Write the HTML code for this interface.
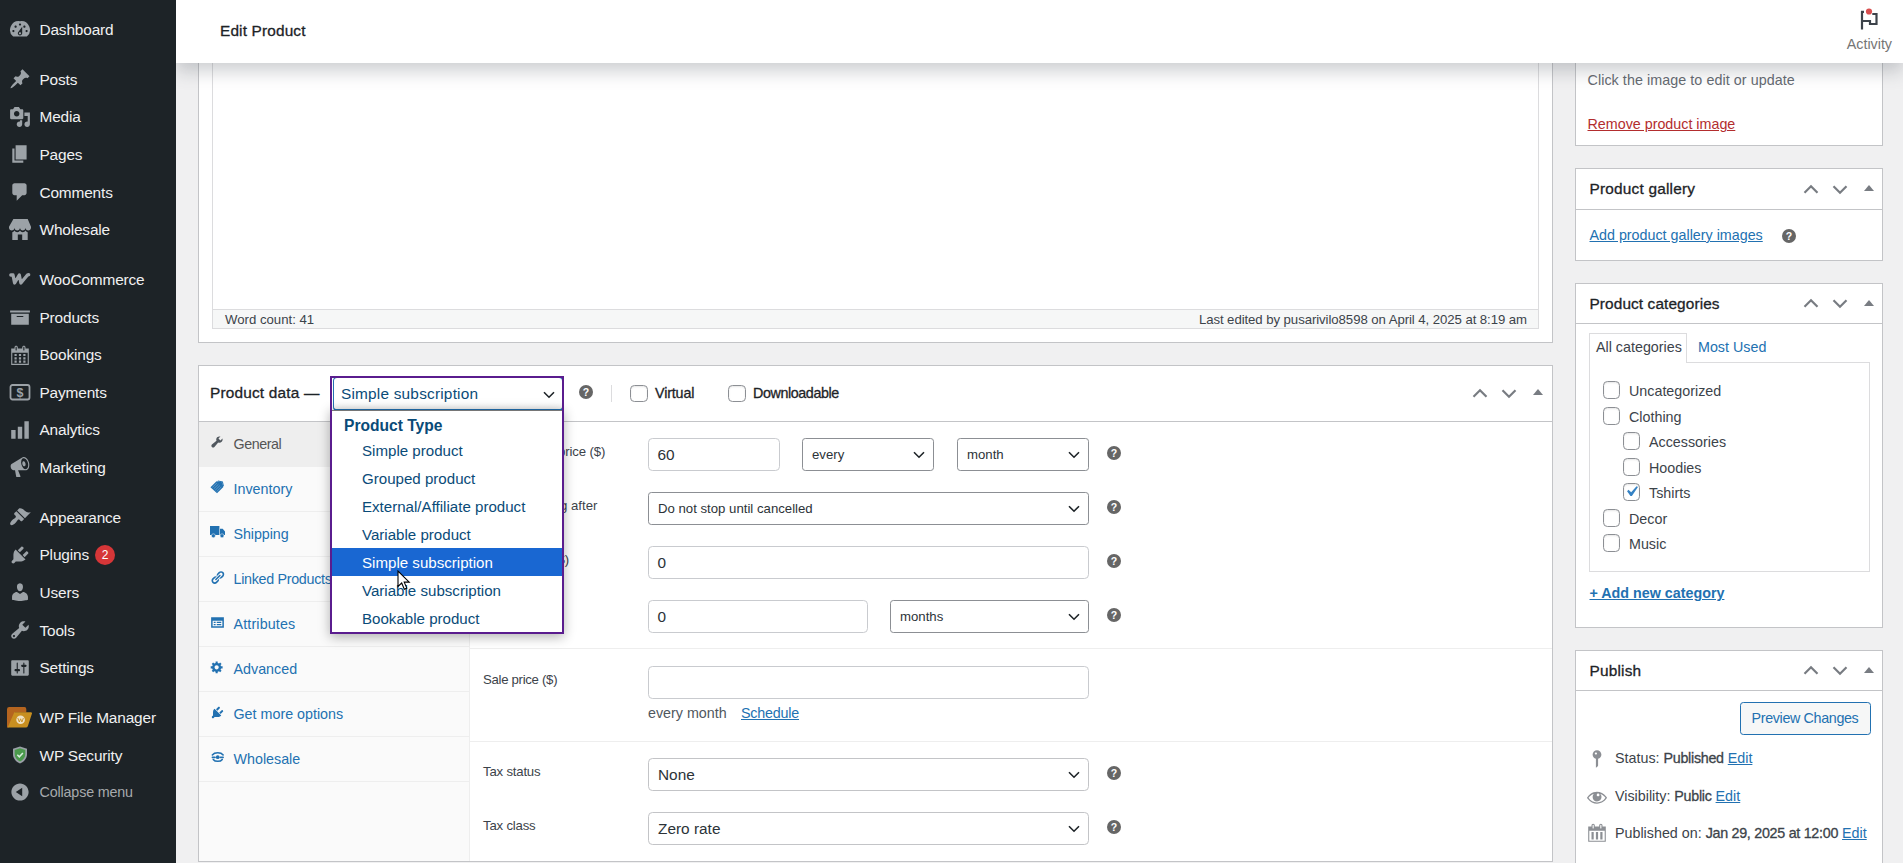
<!DOCTYPE html>
<html lang="en">
<head>
<meta charset="utf-8">
<title>Edit Product</title>
<style>
*{box-sizing:border-box;margin:0;padding:0}
html,body{width:1903px;height:863px;overflow:hidden}
body{background:#f0f0f1;font-family:"Liberation Sans",sans-serif;font-size:14.3px;color:#3c434a;position:relative}
a{color:#2271b1}
.abs{position:absolute}
svg{display:block}
/* sidebar */
#side{position:absolute;left:0;top:0;width:176px;height:863px;background:#1d2327;z-index:30}
.mi{position:absolute;left:0;width:176px;height:37px;color:#f0f0f1;font-size:15.4px;line-height:37px;white-space:nowrap}
.mi svg{position:absolute;left:9px;top:7.5px;width:22px;height:22px;fill:#9ca2a7}
.mi span.t{position:absolute;left:39.5px;top:0;letter-spacing:-.15px}
.badge{position:absolute;background:#d63638;color:#fff;border-radius:10px;width:20px;height:20px;font-size:12px;line-height:20px;text-align:center;top:8.5px}
/* header */
#hdr{position:absolute;left:176px;top:0;width:1727px;height:63px;background:#fff;box-shadow:0 8px 17px 0 rgba(85,93,102,.3);z-index:20}
#hdr .ttl{position:absolute;left:44px;top:21px;letter-spacing:.15px;font-size:15.4px;line-height:20px;font-weight:bold;color:#1d2327}
#hdr .act{position:absolute;right:11px;top:36px;font-size:14.3px;line-height:16px;color:#757575}
/* postboxes */
.pb{position:absolute;background:#fff;border:1px solid #c3c4c7}
.pbh{position:absolute;left:0;right:0;top:0;border-bottom:1px solid #c3c4c7}
.pbh h2{position:absolute;left:13px;font-size:15.4px;font-weight:bold;color:#1d2327;white-space:nowrap}
.hact{position:absolute;right:0;top:0}
.help{position:absolute;width:16px;height:16px}

.cb{width:17.600px;height:17.600px;border:1px solid #8c8f94;border-radius:4.400px;background:#fff;box-shadow:inset 0 1px 2px rgba(0,0,0,.1)}
.tab .ti{position:absolute;left:11px;top:13px;width:15px;height:15px}
.tab .ti svg{width:15px;height:15px}
.inp{border:1px solid #c9cbcf;border-radius:4.400px;background:#fff;padding-left:8.400px;color:#2c3338;white-space:nowrap}
.sel{border:1px solid #8c8f94;border-radius:3.300px;background:#fff;padding-left:9px;color:#2c3338;white-space:nowrap}
.lab{font-size:13.200px;line-height:20px;color:#3c434a;white-space:nowrap}

a{text-decoration:underline}

.sb{font-weight:normal !important;-webkit-text-stroke:.3px currentColor}
b{font-weight:normal;-webkit-text-stroke:.3px currentColor;letter-spacing:-.28px}
</style>
</head>
<body>

<!-- ============ SIDEBAR ============ -->
<div id="side">
<div class="mi" style="top:11.0px"><svg viewBox="0 0 20 20"><path d="M3.76 16h12.48A7.998 7.998 0 0010 2a7.998 7.998 0 00-6.24 14zM10 4c.55 0 1 .45 1 1s-.45 1-1 1-1-.45-1-1 .45-1 1-1zM6 6c.55 0 1 .45 1 1s-.45 1-1 1-1-.45-1-1 .45-1 1-1zm8 0c.55 0 1 .45 1 1s-.45 1-1 1-1-.45-1-1 .45-1 1-1zm-5.37 5.55L12 7v6c0 1.1-.9 2-2 2s-2-.9-2-2c0-.57.24-1.08.63-1.45zM4 10c.55 0 1 .45 1 1s-.45 1-1 1-1-.45-1-1 .45-1 1-1zm12 0c.55 0 1 .45 1 1s-.45 1-1 1-1-.45-1-1 .45-1 1-1zm-5 3c0-.55-.45-1-1-1s-1 .45-1 1 .45 1 1 1 1-.45 1-1z"/></svg><span class="t">Dashboard</span></div>
<div class="mi" style="top:60.5px"><svg viewBox="0 0 20 20"><path d="M10.44 3.02l1.82-1.82 6.36 6.35-1.83 1.82c-1.05-.68-2.48-.57-3.41.36l-.75.75c-.92.93-1.04 2.35-.35 3.41l-1.83 1.82-2.41-2.41-2.8 2.79c-.42.42-3.38 2.71-3.8 2.29s1.86-3.39 2.28-3.81l2.79-2.79L4.1 9.36l1.83-1.82c1.05.69 2.48.57 3.4-.36l.75-.75c.93-.92 1.05-2.35.36-3.41z"/></svg><span class="t">Posts</span></div>
<div class="mi" style="top:98.0px"><svg viewBox="0 0 20 20"><path d="M13 11V4c0-.55-.45-1-1-1h-1.67L9 1H5L3.67 3H2c-.55 0-1 .45-1 1v7c0 .55.45 1 1 1h10c.55 0 1-.45 1-1zM7 4.5c1.38 0 2.5 1.12 2.5 2.5S8.38 9.5 7 9.5 4.5 8.38 4.5 7 5.62 4.5 7 4.5zM14 6h5v10.5c0 1.38-1.12 2.5-2.5 2.5S14 17.88 14 16.5s1.12-2.5 2.5-2.5c.17 0 .34.02.5.05V9h-3V6zm-4 8.05V13h2v3.5c0 1.38-1.12 2.5-2.5 2.5S7 17.88 7 16.5 8.12 14 9.5 14c.17 0 .34.02.5.05z"/></svg><span class="t">Media</span></div>
<div class="mi" style="top:135.5px"><svg viewBox="0 0 20 20"><path d="M6 15V2h10v13H6zm-1 1h8v2H3V5h2v11z"/></svg><span class="t">Pages</span></div>
<div class="mi" style="top:173.5px"><svg viewBox="0 0 20 20"><path d="M5 2h9c1.1 0 2 .9 2 2v7c0 1.1-.9 2-2 2h-2l-5 5v-5H5c-1.1 0-2-.9-2-2V4c0-1.1.9-2 2-2z"/></svg><span class="t">Comments</span></div>
<div class="mi" style="top:211.0px"><svg viewBox="0 0 20 20"><path d="M1 10c.41.29.96.43 1.5.43.55 0 1.09-.14 1.5-.43.62-.46 1-1.17 1-2 0 .83.37 1.54 1 2 .41.29.96.43 1.5.43.55 0 1.09-.14 1.5-.43.62-.46 1-1.17 1-2 0 .83.37 1.54 1 2 .41.29.96.43 1.51.43.54 0 1.08-.14 1.49-.43.62-.46 1-1.17 1-2 0 .83.37 1.54 1 2 .41.29.96.43 1.5.43.55 0 1.09-.14 1.5-.43.63-.46 1-1.17 1-2V7l-3-7H4L0 7v1c0 .83.37 1.54 1 2zm2 8.99h5v-5h4v5h5v-7c-.37-.05-.72-.22-1-.43-.63-.45-1-.73-1-1.56 0 .83-.38 1.11-1 1.56-.41.3-.95.43-1.49.44-.55 0-1.1-.14-1.51-.44-.63-.45-1-.73-1-1.56 0 .83-.38 1.11-1 1.56-.41.3-.95.43-1.5.44-.54 0-1.09-.14-1.5-.44-.63-.45-1-.73-1-1.56 0 .83-.38 1.11-1 1.56-.29.21-.63.38-1 .44v6.99z"/></svg><span class="t">Wholesale</span></div>
<div class="mi" style="top:260.5px"><svg viewBox="0 0 22 22" style="fill:none;stroke:#9ca2a7;stroke-width:3.300;stroke-linejoin:round;stroke-linecap:round"><path d="M1.800 7 h2.200 l1.600 8 l4.700 -8 l1.600 8 l5.300 -6.500 q1.500 -2 2.500 -1.800"/></svg><span class="t">WooCommerce</span></div>
<div class="mi" style="top:298.5px"><svg viewBox="0 0 20 20"><path d="M19 4v2H1V4h18zM2 7h16v10H2V7zm11 3V9H7v1h6z"/></svg><span class="t">Products</span></div>
<div class="mi" style="top:336.0px"><svg viewBox="0 0 20 20"><path d="M15 4h3v15H2V4h3V3c0-.41.15-.76.44-1.06.29-.29.65-.44 1.06-.44s.77.15 1.06.44c.29.3.44.65.44 1.06v1h4V3c0-.41.15-.76.44-1.06.29-.29.65-.44 1.06-.44s.77.15 1.06.44c.29.3.44.65.44 1.06v1zM6 3v2.500c0 .14.05.26.15.36.09.09.21.14.35.14s.26-.05.35-.14c.1-.1.15-.22.15-.36V3c0-.14-.05-.26-.15-.35-.09-.1-.21-.15-.35-.15s-.26.05-.35.15c-.1.09-.15.21-.15.35zm7 0v2.500c0 .14.05.26.14.36.1.09.22.14.36.14s.26-.05.36-.14c.09-.1.14-.22.14-.36V3c0-.14-.05-.26-.14-.35-.1-.1-.22-.15-.36-.15s-.26.05-.36.15c-.09.09-.14.21-.14.35zm4 15V8H3v10h14zM7 9v2H5V9h2zm2 0h2v2H9V9zm4 2V9h2v2h-2zm-6 1v2H5v-2h2zm2 0h2v2H9v-2zm4 2v-2h2v2h-2zm-6 1v2H5v-2h2zm4 2H9v-2h2v2zm4 0h-2v-2h2v2z"/></svg><span class="t">Bookings</span></div>
<div class="mi" style="top:373.5px"><svg viewBox="0 0 22 22"><rect x="1.500" y="4" width="19" height="14.500" rx="2" style="fill:none;stroke:#9ca2a7;stroke-width:1.800"/><text x="11" y="15.800" text-anchor="middle" style="font:bold 12.500px 'Liberation Sans',sans-serif;fill:#9ca2a7">$</text></svg><span class="t">Payments</span></div>
<div class="mi" style="top:411.0px"><svg viewBox="0 0 20 20"><path d="M18 18V2h-4v16h4zm-6 0V7H8v11h4zm-6 0v-8H2v8h4z"/></svg><span class="t">Analytics</span></div>
<div class="mi" style="top:448.5px"><svg viewBox="0 0 20 20"><path d="M18.15 5.94c.46 1.62.38 3.22-.02 4.48-.42 1.28-1.26 2.18-2.3 2.48-.16.06-.26.06-.4.06-.06.02-.12.02-.18.02-.06.02-.14.02-.22.02h-6.8l2.22 5.5c.02.14-.06.26-.14.34-.08.1-.24.16-.34.16H6.95c-.1 0-.26-.06-.34-.16-.08-.08-.16-.2-.14-.34l-1-5.5H4.25l-.02-.02c-.5.06-1.08-.18-1.54-.62s-.88-1.08-1.06-1.88c-.24-.8-.2-1.56-.02-2.2.18-.62.58-1.08 1.06-1.3l.02-.02 9-5.4c.1-.06.18-.1.24-.16.06-.04.14-.08.24-.12.16-.08.28-.12.5-.18 1.04-.3 2.24.1 3.22.98s1.84 2.24 2.26 3.86zm-2.58 5.98h-.02c.4-.1.74-.34 1.04-.7.58-.7.86-1.76.86-3.04 0-.64-.1-1.3-.28-1.98-.34-1.36-1.02-2.5-1.78-3.24s-1.68-1.1-2.46-.88c-.82.22-1.4.96-1.7 2-.32 1.04-.28 2.36.06 3.72.38 1.36 1 2.5 1.8 3.24.78.74 1.62 1.1 2.48.88zm-2.54-7.08c.22-.04.42-.02.62.04.38.16.76.48 1.02 1s.42 1.2.42 1.78c0 .3-.04.56-.12.8-.18.48-.44.84-.86.94-.34.1-.8-.06-1.14-.4s-.64-.86-.78-1.5c-.18-.62-.12-1.24.02-1.72s.48-.84.82-.94z"/></svg><span class="t">Marketing</span></div>
<div class="mi" style="top:498.5px"><svg viewBox="0 0 20 20"><path d="M14.48 11.06L7.41 3.99l1.5-1.5c.5-.56 2.3-.47 3.51.32 1.21.8 1.43 1.28 2.91 2.1 1.18.64 2.45 1.26 4.45.85zm-.71.71L6.7 4.7 4.93 6.47c-.39.39-.39 1.02 0 1.41l1.06 1.06c.39.39.39 1.03 0 1.42-.6.6-1.43 1.11-2.21 1.69-.35.26-.7.53-1.01.84C1.43 14.23.4 16.08 1.4 17.07c.99 1 2.84-.03 4.18-1.36.31-.31.58-.66.85-1.02.57-.78 1.08-1.61 1.69-2.21.39-.39 1.02-.39 1.41 0l1.06 1.06c.39.39 1.02.39 1.41 0z"/></svg><span class="t">Appearance</span></div>
<div class="mi" style="top:536.0px"><svg viewBox="0 0 20 20"><path d="M13.11 4.36L9.87 7.6 8 5.73l3.24-3.24c.35-.34 1.05-.2 1.56.32.52.51.66 1.21.31 1.55zm-8 1.77l.91-1.12 9.01 9.01-1.19.84c-.71.71-2.63 1.16-3.82 1.16H6.14L4.9 17.26c-.59.59-1.54.59-2.12 0-.59-.58-.59-1.53 0-2.12l1.24-1.24v-3.88c0-1.13.4-3.19 1.09-3.89zm7.26 3.97l3.24-3.24c.34-.35 1.04-.21 1.55.31.52.51.66 1.21.31 1.55l-3.24 3.25z"/></svg><span class="t">Plugins</span><span class="badge" style="left:95px">2</span></div>
<div class="mi" style="top:573.5px"><svg viewBox="0 0 20 20"><path d="M10 9.25c-2.27 0-2.73-3.44-2.73-3.44C7 4.02 7.82 2 9.97 2c2.16 0 2.98 2.02 2.71 3.81 0 0-.41 3.44-2.68 3.44zm0 2.57L12.72 10c2.39 0 4.52 2.33 4.52 4.53v2.49s-3.65 1.13-7.24 1.13c-3.65 0-7.24-1.13-7.24-1.13v-2.49c0-2.25 1.94-4.48 4.47-4.48z"/></svg><span class="t">Users</span></div>
<div class="mi" style="top:611.5px"><svg viewBox="0 0 20 20"><path d="M16.68 9.77c-1.34 1.34-3.3 1.67-4.95.99l-5.41 6.52c-.99.99-2.59.99-3.58 0s-.99-2.59 0-3.57l6.52-5.42c-.68-1.65-.35-3.61.99-4.95 1.28-1.28 3.12-1.62 4.72-1.06l-2.89 2.89 2.82 2.82 2.86-2.87c.53 1.58.18 3.39-1.08 4.65zM3.81 16.21c.4.39 1.04.39 1.43 0 .4-.4.4-1.04 0-1.43-.39-.4-1.03-.4-1.43 0-.39.39-.39 1.03 0 1.43z"/></svg><span class="t">Tools</span></div>
<div class="mi" style="top:649.0px"><svg viewBox="0 0 20 20"><path d="M18 16V4c0-.55-.45-1-1-1H3c-.55 0-1 .45-1 1v12c0 .55.45 1 1 1h14c.55 0 1-.45 1-1zM8 11h1c.55 0 1 .45 1 1s-.45 1-1 1H8v1.5c0 .28-.22.5-.5.5s-.5-.22-.5-.5V13H6c-.55 0-1-.45-1-1s.45-1 1-1h1V5.500c0-.28.22-.5.5-.5s.5.22.5.5V11zm5-2h-1c-.55 0-1-.45-1-1s.45-1 1-1h1V5.500c0-.28.22-.5.5-.5s.5.22.5.5V7h1c.55 0 1 .45 1 1s-.45 1-1 1h-1v5.500c0 .28-.22.5-.5.5s-.5-.22-.5-.5V9z"/></svg><span class="t">Settings</span></div>
<div class="mi" style="top:699.0px"><svg viewBox="0 0 25 21" style="left:7px;top:7.500px;width:25px;height:21px"><path d="M0 2.200q0-2.200 2.200-2.200h15.300q1.800 0 1.800 2v3.500H8L1.500 20.500H0z" fill="#b4641f"/><path d="M7.300 5.300h16.500q1.600 0 1.100 1.500l-4 12.200q-.5 1.500-2.100 1.500H.6z" fill="#c88f20"/><circle cx="13.600" cy="12.800" r="4.300" fill="#efe2c6"/><path d="M10.800 11l1.500 4 1.300-3.200 1.300 3.200 1.500-4" fill="none" stroke="#c88f20" stroke-width=".9"/></svg><span class="t">WP File Manager</span></div>
<div class="mi" style="top:736.5px"><svg viewBox="0 0 22 22"><path d="M11 2.500l7 2.300v5.200c0 4.500-3 7.800-7 9.500-4-1.700-7-5-7-9.500V4.800z" fill="#9aa0a7"/><path d="M11 4.300l5.300 1.800v4c0 3.500-2.300 6.100-5.300 7.500-3-1.400-5.300-4-5.300-7.500v-4z" fill="#4a9a4c"/><path d="M8.300 10.800l2 2 3.600-3.800" fill="none" stroke="#d8f0de" stroke-width="1.500"/></svg><span class="t">WP Security</span></div>
<div class="mi" style="top:773.5px"><svg viewBox="0 0 20 20"><path d="M10 2.16c4.33 0 7.84 3.51 7.84 7.84s-3.51 7.84-7.84 7.84S2.16 14.330 2.16 10 5.670 2.16 10 2.16zm2 11.72V6.120L6.180 9.970z"/></svg><span class="t" style="color:#a7aaad;font-size:14.3px">Collapse menu</span></div>
</div>

<!-- ============ HEADER ============ -->
<div id="hdr">
  <div class="ttl sb">Edit Product</div>
  <svg class="abs" style="left:1683px;top:6px;width:22px;height:26px" viewBox="0 0 22 26"><path d="M2 5.800h3 M3 5v18.500 M3 15h8v3h6.500V8h-4.200" fill="none" stroke="#3c434a" stroke-width="2.200"/><circle cx="10" cy="5.500" r="3.100" fill="#d94f4f"/></svg>
  <div class="act">Activity</div>
</div>

<!-- ============ MAIN COLUMN ============ -->
<div class="pb" style="left:198px;top:-40px;width:1355px;height:383px"></div>
<div class="abs" style="left:212px;top:-20px;width:1327px;height:349px;border:1px solid #dcdcde;background:#fff"></div>
<div class="abs" style="left:212px;top:309px;width:1327px;height:20px;border:1px solid #dcdcde;background:#f6f7f7;font-size:13.200px;line-height:19px;color:#3c434a">
  <span class="abs" style="left:12px;top:0">Word count: 41</span>
  <span class="abs" style="right:11px;top:0;white-space:nowrap;letter-spacing:-.07px">Last edited by pusarivilo8598 on April 4, 2025 at 8:19 am</span>
</div>
<div class="pb" id="pd" style="left:198px;top:365px;width:1355px;height:497px">
<div class="pbh" style="height:56px"></div>
<h2 class="abs sb" style="left:11px;top:17px;font-size:15.400px;line-height:20px;font-weight:bold;color:#1d2327;white-space:nowrap;letter-spacing:.18px">Product data —</h2>
<div class="abs" style="left:134px;top:11px;width:230px;height:34px;border:1px solid #2271b1;border-bottom-width:2px;border-radius:4px;background:linear-gradient(#fff 80%,#f3f3f3);color:#0a4b78;font-size:15.400px;line-height:31px;padding-left:7px;letter-spacing:.2px;white-space:nowrap">Simple subscription<svg class="abs" style="right:7px;top:12.500px;width:12px;height:8px" viewBox="0 0 12 8"><path d="M1 1.200 L6 6.200 L11 1.200" fill="none" stroke="#1d2327" stroke-width="1.600"/></svg></div>
<svg class="abs" style="left:379.5px;top:18.800px;width:14px;height:14px" viewBox="0 0 14 14"><circle cx="7" cy="7" r="7" fill="#666"/><text x="7" y="10.800" text-anchor="middle" style="font:bold 10.500px 'Liberation Sans',sans-serif;fill:#fff">?</text></svg>
<div class="abs" style="left:412px;top:19px;width:1px;height:17px;background:#dcdcde"></div>
<div class="cb abs" style="left:431px;top:18.500px"></div><span class="abs sb" style="left:456px;top:17px;line-height:20px;letter-spacing:-.15px;color:#1d2327">Virtual</span>
<div class="cb abs" style="left:529px;top:18.500px"></div><span class="abs sb" style="left:554px;top:17px;line-height:20px;letter-spacing:-.4px;color:#1d2327">Downloadable</span>
<svg class="abs" style="left:1273px;top:21.5px;width:16px;height:11px" viewBox="0 0 16 10.500"><path d="M1.500 8.500 L8 2 L14.500 8.500" fill="none" stroke="#787c82" stroke-width="2.200"/></svg><svg class="abs" style="left:1302px;top:21.5px;width:16px;height:11px" viewBox="0 0 16 10.500"><path d="M1.500 2 L8 8.500 L14.500 2" fill="none" stroke="#787c82" stroke-width="2.200"/></svg><svg class="abs" style="left:1334px;top:23px;width:10px;height:6px" viewBox="0 0 10 6"><path d="M0 6 L5 0 L10 6z" fill="#787c82"/></svg>
<div class="abs" style="left:0;top:56px;width:271px;height:439px;background:#fafafa;border-right:1px solid #eee"></div>
<div class="tab abs" style="left:0;top:56px;width:270px;height:45px;border-bottom:1px solid #eee;background:#eee;color:#555"><span class="ti" style="fill:#50575e"><svg viewBox="0 0 20 20" style="width:14px;height:14px;margin:-.5px 0 0 -.3px"><path d="M16.680 9.770c-1.340 1.340-3.300 1.670-4.950.99l-5.410 6.520c-.99.99-2.590.99-3.580 0s-.99-2.590 0-3.570l6.520-5.420c-.68-1.650-.35-3.610.99-4.950 1.280-1.280 3.120-1.620 4.720-1.060l-2.890 2.890 2.820 2.820 2.860-2.870c.53 1.580.18 3.390-1.080 4.650z"/></svg></span><span class="abs" style="left:34.500px;top:12px;line-height:20px;white-space:nowrap;letter-spacing:-.45px">General</span></div>
<div class="tab abs" style="left:0;top:101px;width:270px;height:45px;border-bottom:1px solid #eee;background:transparent;color:#2271b1"><span class="ti" style="fill:#2271b1"><svg viewBox="0 0 15 15" style="width:14px;height:14px;margin:0 0 0 0"><path d="M.5 7.800 L7 1.300 L13 2.300 L14.300 7.500 L7.500 14.200z"/><path d="M2.500 8 L7.600 3 M4 9.500 L9.100 4.500 M5.500 11 L10.600 6 M7 12.500 L12.100 7.500" stroke="#fafafa" stroke-width=".55" opacity=".55"/><path d="M8.500 .6 L13.800 1.500 L14.900 6.300 L13.900 6.600 L12.900 2.400 L8.300 1.600z"/></svg></span><span class="abs" style="left:34.500px;top:12px;line-height:20px;white-space:nowrap">Inventory</span></div>
<div class="tab abs" style="left:0;top:146px;width:270px;height:45px;border-bottom:1px solid #eee;background:transparent;color:#2271b1"><span class="ti" style="fill:#2271b1"><svg viewBox="0 0 16 13" style="width:16px;height:13px;margin:1.300px 0 0 -.2px"><path d="M0 0h9.400v9H0z M10 2.700h2.700l2.300 2.900v3.400H10z"/><circle cx="3.400" cy="9.800" r="2" stroke="#fafafa" stroke-width=".5"/><circle cx="12" cy="9.800" r="2" stroke="#fafafa" stroke-width=".5"/></svg></span><span class="abs" style="left:34.500px;top:12px;line-height:20px;white-space:nowrap;letter-spacing:-.08px">Shipping</span></div>
<div class="tab abs" style="left:0;top:191px;width:270px;height:45px;border-bottom:1px solid #eee;background:transparent;color:#2271b1"><span class="ti" style="fill:#2271b1"><svg viewBox="0 0 20 20"><path d="M17.740 2.760c1.680 1.690 1.680 4.410 0 6.100l-1.530 1.520c-1.120 1.120-2.700 1.470-4.140 1.090l2.620-2.610.76-.77.76-.76c.84-.84.84-2.200 0-3.040-.84-.85-2.200-.85-3.040 0l-.77.76-3.380 3.380c-.37-1.440-.02-3.020 1.100-4.140l1.520-1.530c1.690-1.680 4.420-1.680 6.100 0zM8.590 13.430l5.340-5.340c.42-.42.42-1.100 0-1.520-.44-.43-1.130-.39-1.530 0l-5.330 5.340c-.42.42-.42 1.100 0 1.520.44.43 1.130.39 1.520 0zm-.76 2.290l4.140-4.150c.38 1.440.03 3.020-1.090 4.140l-1.520 1.530c-1.690 1.680-4.410 1.680-6.100 0-1.680-1.680-1.680-4.420 0-6.100l1.530-1.520c1.120-1.120 2.700-1.470 4.140-1.100l-4.140 4.150c-.85.84-.85 2.200 0 3.050.84.840 2.200.840 3.040 0z"/></svg></span><span class="abs" style="left:34.500px;top:12px;line-height:20px;white-space:nowrap;letter-spacing:-.3px">Linked Products</span></div>
<div class="tab abs" style="left:0;top:236px;width:270px;height:45px;border-bottom:1px solid #eee;background:transparent;color:#2271b1"><span class="ti" style="fill:#2271b1"><svg viewBox="0 0 20 20"><path d="M1.500 3h17v14h-17z M3.500 7.500v7.500h13V7.500z M5 9h2.500v1.500H5z M9 9h6v1.500H9z M5 12h2.500v1.500H5z M9 12h6v1.500H9z" fill-rule="evenodd"/></svg></span><span class="abs" style="left:34.500px;top:12px;line-height:20px;white-space:nowrap;letter-spacing:.15px">Attributes</span></div>
<div class="tab abs" style="left:0;top:281px;width:270px;height:45px;border-bottom:1px solid #eee;background:transparent;color:#2271b1"><span class="ti" style="fill:#2271b1"><svg viewBox="0 0 20 20" style="width:14px;height:14px;margin:.3px 0 0 .3px"><path d="M18 12h-2.180c-.17.7-.44 1.350-.81 1.930l1.540 1.540-2.100 2.100-1.540-1.540c-.58.36-1.230.63-1.910.79V19H8v-2.180c-.68-.16-1.330-.43-1.910-.79l-1.540 1.540-2.120-2.120 1.540-1.540c-.36-.58-.63-1.230-.79-1.910H1V9.030h2.170c.16-.7.44-1.350.8-1.940L2.430 5.550l2.100-2.100 1.540 1.540c.58-.37 1.240-.64 1.930-.81V2h3v2.180c.68.16 1.330.43 1.910.79l1.540-1.540 2.120 2.120-1.540 1.540c.36.59.64 1.240.8 1.940H18V12zm-8.500 1.500c1.660 0 3-1.340 3-3s-1.340-3-3-3-3 1.340-3 3 1.340 3 3 3z"/></svg></span><span class="abs" style="left:34.500px;top:12px;line-height:20px;white-space:nowrap">Advanced</span></div>
<div class="tab abs" style="left:0;top:326px;width:270px;height:45px;border-bottom:1px solid #eee;background:transparent;color:#2271b1"><span class="ti" style="fill:#2271b1"><svg viewBox="0 0 20 20"><path d="M13.110 4.360L9.870 7.600 8 5.730l3.240-3.240c.35-.34 1.050-.2 1.560.32.52.51.66 1.210.31 1.550zm-8 1.770l.91-1.120 9.010 9.010-1.190.84c-.71.71-2.630 1.160-3.820 1.160H6.140L4.900 17.260c-.59.59-1.540.59-2.120 0-.59-.58-.59-1.530 0-2.120l1.240-1.240v-3.880c0-1.130.4-3.190 1.090-3.890zm7.260 3.970l3.240-3.240c.34-.35 1.040-.21 1.550.31.52.51.66 1.210.31 1.550l-3.240 3.250z"/></svg></span><span class="abs" style="left:34.500px;top:12px;line-height:20px;white-space:nowrap">Get more options</span></div>
<div class="tab abs" style="left:0;top:371px;width:270px;height:45px;border-bottom:1px solid #eee;background:transparent;color:#2271b1"><span class="ti" style="fill:#2271b1"><svg viewBox="0 0 15 15" style="width:13.500px;height:13.500px;margin:.2px 0 0 .5px"><path d="M1.500 5.500 C4 2.300 11 2.300 13.500 5.500" fill="none" stroke="#2271b1" stroke-width="1.700" stroke-linecap="round"/><path d="M1.500 8.200 h3 M10.500 8.200 h3" fill="none" stroke="#2271b1" stroke-width="1.700" stroke-linecap="round"/><path d="M2.500 10.500 C4.500 13.300 10.500 13.300 12.500 10.500" fill="none" stroke="#2271b1" stroke-width="1.700" stroke-linecap="round"/><circle cx="7.500" cy="8" r="2.100"/></svg></span><span class="abs" style="left:34.500px;top:12px;line-height:20px;white-space:nowrap">Wholesale</span></div>
<span class="abs lab" style="left:284px;top:76.0px;letter-spacing:-.1px">Subscription price ($)</span>
<div class="abs inp" style="left:449px;top:72px;width:132px;height:33px;font-size:15.4px;line-height:31px">60</div>
<div class="abs sel" style="left:603px;top:72px;width:132px;height:33px;font-size:13.2px;line-height:31px">every<svg class="abs" style="right:8.500px;top:12.0px;width:12px;height:8px" viewBox="0 0 12 8"><path d="M1 1.200 L6 6.200 L11 1.200" fill="none" stroke="#1d2327" stroke-width="1.600"/></svg></div>
<div class="abs sel" style="left:758px;top:72px;width:132px;height:33px;font-size:13.2px;line-height:31px">month<svg class="abs" style="right:8.500px;top:12.0px;width:12px;height:8px" viewBox="0 0 12 8"><path d="M1 1.200 L6 6.200 L11 1.200" fill="none" stroke="#1d2327" stroke-width="1.600"/></svg></div>
<svg class="abs" style="left:907.5px;top:80.0px;width:14px;height:14px" viewBox="0 0 14 14"><circle cx="7" cy="7" r="7" fill="#666"/><text x="7" y="10.800" text-anchor="middle" style="font:bold 10.500px 'Liberation Sans',sans-serif;fill:#fff">?</text></svg>
<span class="abs lab" style="left:284px;top:130.0px;letter-spacing:0">Stop renewing after</span>
<div class="abs sel" style="left:449px;top:126px;width:441px;height:33px;font-size:13.2px;line-height:31px">Do not stop until cancelled<svg class="abs" style="right:8.500px;top:12.0px;width:12px;height:8px" viewBox="0 0 12 8"><path d="M1 1.200 L6 6.200 L11 1.200" fill="none" stroke="#1d2327" stroke-width="1.600"/></svg></div>
<svg class="abs" style="left:907.5px;top:134.0px;width:14px;height:14px" viewBox="0 0 14 14"><circle cx="7" cy="7" r="7" fill="#666"/><text x="7" y="10.800" text-anchor="middle" style="font:bold 10.500px 'Liberation Sans',sans-serif;fill:#fff">?</text></svg>
<span class="abs lab" style="left:284px;top:184.0px;letter-spacing:-.08px">Sign-up fee ($)</span>
<div class="abs inp" style="left:449px;top:180px;width:441px;height:33px;font-size:15.4px;line-height:31px">0</div>
<svg class="abs" style="left:907.5px;top:188.0px;width:14px;height:14px" viewBox="0 0 14 14"><circle cx="7" cy="7" r="7" fill="#666"/><text x="7" y="10.800" text-anchor="middle" style="font:bold 10.500px 'Liberation Sans',sans-serif;fill:#fff">?</text></svg>
<span class="abs lab" style="left:284px;top:238.0px;letter-spacing:-.1px">Free trial</span>
<div class="abs inp" style="left:449px;top:234px;width:220px;height:33px;font-size:15.4px;line-height:31px">0</div>
<div class="abs sel" style="left:691px;top:234px;width:199px;height:33px;font-size:13.2px;line-height:31px">months<svg class="abs" style="right:8.500px;top:12.0px;width:12px;height:8px" viewBox="0 0 12 8"><path d="M1 1.200 L6 6.200 L11 1.200" fill="none" stroke="#1d2327" stroke-width="1.600"/></svg></div>
<svg class="abs" style="left:907.5px;top:242.0px;width:14px;height:14px" viewBox="0 0 14 14"><circle cx="7" cy="7" r="7" fill="#666"/><text x="7" y="10.800" text-anchor="middle" style="font:bold 10.500px 'Liberation Sans',sans-serif;fill:#fff">?</text></svg>
<div class="abs" style="left:271px;top:282px;width:1082px;height:1px;background:#eee"></div>
<span class="abs lab" style="left:284px;top:304.0px;letter-spacing:-.3px">Sale price ($)</span>
<div class="abs inp" style="left:449px;top:300px;width:441px;height:33px;font-size:15.4px;line-height:31px"></div>
<span class="abs" style="left:449px;top:336.700px;line-height:20px;white-space:nowrap;color:#50575e">every month</span>
<a class="abs" style="left:542px;top:336.700px;line-height:20px;letter-spacing:-.2px">Schedule</a>
<div class="abs" style="left:271px;top:375px;width:1082px;height:1px;background:#eee"></div>
<span class="abs lab" style="left:284px;top:396.0px;letter-spacing:-.2px">Tax status</span>
<div class="abs sel" style="left:449px;top:392px;width:441px;height:33px;font-size:15.4px;line-height:31px;border-color:#c3c4c7;border-radius:4.400px">None<svg class="abs" style="right:8.500px;top:12.0px;width:12px;height:8px" viewBox="0 0 12 8"><path d="M1 1.200 L6 6.200 L11 1.200" fill="none" stroke="#1d2327" stroke-width="1.600"/></svg></div>
<svg class="abs" style="left:907.5px;top:400.0px;width:14px;height:14px" viewBox="0 0 14 14"><circle cx="7" cy="7" r="7" fill="#666"/><text x="7" y="10.800" text-anchor="middle" style="font:bold 10.500px 'Liberation Sans',sans-serif;fill:#fff">?</text></svg>
<span class="abs lab" style="left:284px;top:450.0px;letter-spacing:-.2px">Tax class</span>
<div class="abs sel" style="left:449px;top:446px;width:441px;height:33px;font-size:15.4px;line-height:31px;border-color:#c3c4c7;border-radius:4.400px">Zero rate<svg class="abs" style="right:8.500px;top:12.0px;width:12px;height:8px" viewBox="0 0 12 8"><path d="M1 1.200 L6 6.200 L11 1.200" fill="none" stroke="#1d2327" stroke-width="1.600"/></svg></div>
<svg class="abs" style="left:907.5px;top:454.0px;width:14px;height:14px" viewBox="0 0 14 14"><circle cx="7" cy="7" r="7" fill="#666"/><text x="7" y="10.800" text-anchor="middle" style="font:bold 10.500px 'Liberation Sans',sans-serif;fill:#fff">?</text></svg>
</div>

<!-- ============ RIGHT COLUMN ============ -->
<div class="pb" style="left:1575px;top:-60px;width:308px;height:206px"><span class="abs" style="left:11.500px;top:129px;line-height:20px;color:#646970;white-space:nowrap;letter-spacing:.07px">Click the image to edit or update</span><a class="abs" style="left:11.500px;top:173px;line-height:20px;color:#b32d2e;white-space:nowrap">Remove product image</a></div>
<div class="pb" style="left:1575px;top:168px;width:308px;height:93px"><div class="pbh" style="height:41px"></div><h2 class="abs sb" style="left:13.500px;top:10px;letter-spacing:.2px;font-size:15.400px;line-height:20px;font-weight:bold;color:#1d2327;white-space:nowrap">Product gallery</h2><svg class="abs" style="left:226.5px;top:14.700px;width:16px;height:11px" viewBox="0 0 16 10.500"><path d="M1.500 8.500 L8 2 L14.500 8.500" fill="none" stroke="#787c82" stroke-width="2.200"/></svg><svg class="abs" style="left:255.5px;top:14.700px;width:16px;height:11px" viewBox="0 0 16 10.500"><path d="M1.500 2 L8 8.500 L14.500 2" fill="none" stroke="#787c82" stroke-width="2.200"/></svg><svg class="abs" style="left:287.5px;top:16.400px;width:10px;height:6px" viewBox="0 0 10 6"><path d="M0 6 L5 0 L10 6z" fill="#787c82"/></svg><a class="abs" style="left:13.500px;top:56px;line-height:20px;white-space:nowrap">Add product gallery images</a><svg class="abs" style="left:205.7px;top:59.5px;width:14px;height:14px" viewBox="0 0 14 14"><circle cx="7" cy="7" r="7" fill="#666"/><text x="7" y="10.800" text-anchor="middle" style="font:bold 10.500px 'Liberation Sans',sans-serif;fill:#fff">?</text></svg></div>
<div class="pb" style="left:1575px;top:283px;width:308px;height:345px"><div class="pbh" style="height:39.500px"></div><h2 class="abs sb" style="left:13.500px;top:9.500px;letter-spacing:.1px;font-size:15.400px;line-height:20px;font-weight:bold;color:#1d2327;white-space:nowrap">Product categories</h2><svg class="abs" style="left:226.5px;top:13.800px;width:16px;height:11px" viewBox="0 0 16 10.500"><path d="M1.500 8.500 L8 2 L14.500 8.500" fill="none" stroke="#787c82" stroke-width="2.200"/></svg><svg class="abs" style="left:255.5px;top:13.800px;width:16px;height:11px" viewBox="0 0 16 10.500"><path d="M1.500 2 L8 8.500 L14.500 2" fill="none" stroke="#787c82" stroke-width="2.200"/></svg><svg class="abs" style="left:287.5px;top:15.600px;width:10px;height:6px" viewBox="0 0 10 6"><path d="M0 6 L5 0 L10 6z" fill="#787c82"/></svg><div class="abs" style="left:12.500px;top:78px;width:281px;height:210px;border:1px solid #dcdcde;background:#fff"></div><div class="abs" style="left:12.500px;top:49px;width:98px;height:30px;border:1px solid #dcdcde;border-bottom:none;background:#fff"></div><span class="abs" style="left:20px;top:53px;line-height:20px;white-space:nowrap;color:#3c434a">All categories</span><a class="abs" style="left:122px;top:53px;line-height:20px;white-space:nowrap;text-decoration:none">Most Used</a><div class="cb abs" style="left:26.5px;top:97.0px"></div><span class="abs" style="left:53.0px;top:97px;line-height:20px;white-space:nowrap">Uncategorized</span><div class="cb abs" style="left:26.5px;top:123.0px"></div><span class="abs" style="left:53.0px;top:123px;line-height:20px;white-space:nowrap">Clothing</span><div class="cb abs" style="left:46.5px;top:148.0px"></div><span class="abs" style="left:73.0px;top:148px;line-height:20px;white-space:nowrap">Accessories</span><div class="cb abs" style="left:46.5px;top:174.0px"></div><span class="abs" style="left:73.0px;top:174px;line-height:20px;white-space:nowrap">Hoodies</span><div class="cb abs" style="left:46.5px;top:199.0px"><svg viewBox="0 0 20 20" style="position:absolute;left:-2.800px;top:-3.300px;width:21px;height:21px"><path d="M14.830 4.890l1.340.94-5.810 8.380H9.020L5.780 9.670l1.340-1.250 2.570 2.400z" fill="#3582c4"/></svg></div><span class="abs" style="left:73.0px;top:199px;line-height:20px;white-space:nowrap">Tshirts</span><div class="cb abs" style="left:26.5px;top:225.0px"></div><span class="abs" style="left:53.0px;top:225px;line-height:20px;white-space:nowrap">Decor</span><div class="cb abs" style="left:26.5px;top:250.0px"></div><span class="abs" style="left:53.0px;top:250px;line-height:20px;white-space:nowrap">Music</span><a class="abs" style="left:13.500px;top:299px;line-height:20px;white-space:nowrap;font-weight:bold">+ Add new category</a></div>
<div class="pb" style="left:1575px;top:650px;width:308px;height:260px"><div class="pbh" style="height:40px"></div><h2 class="abs sb" style="left:13.500px;top:10px;letter-spacing:.2px;font-size:15.400px;line-height:20px;font-weight:bold;color:#1d2327;white-space:nowrap">Publish</h2><svg class="abs" style="left:226.5px;top:13.700px;width:16px;height:11px" viewBox="0 0 16 10.500"><path d="M1.500 8.500 L8 2 L14.500 8.500" fill="none" stroke="#787c82" stroke-width="2.200"/></svg><svg class="abs" style="left:255.5px;top:13.700px;width:16px;height:11px" viewBox="0 0 16 10.500"><path d="M1.500 2 L8 8.500 L14.500 2" fill="none" stroke="#787c82" stroke-width="2.200"/></svg><svg class="abs" style="left:287.5px;top:15.700px;width:10px;height:6px" viewBox="0 0 10 6"><path d="M0 6 L5 0 L10 6z" fill="#787c82"/></svg><div class="abs" style="left:163.500px;top:50.500px;width:131px;height:33px;letter-spacing:-.35px;border:1px solid #2271b1;border-radius:3.300px;background:#f6f7f7;color:#2271b1;text-align:center;line-height:31px;white-space:nowrap">Preview Changes</div><span class="abs" style="left:10px;top:96.5px;width:22px;height:22px"><svg viewBox="0 0 20 20" style="width:22px;height:22px;fill:#8c8f94"><path d="M14 6c0 1.860-1.280 3.410-3 3.860V16c0 1-2 2-2 2V9.860c-1.720-.45-3-2-3-3.860 0-2.210 1.790-4 4-4s4 1.790 4 4zM8 5c0 .55.45 1 1 1s1-.45 1-1-.45-1-1-1-1 .45-1 1z"/></svg></span><span class="abs" style="left:39px;top:97.0px;line-height:20px;white-space:nowrap">Status: <b>Published</b> <a>Edit</a></span><span class="abs" style="left:10px;top:134.5px;width:22px;height:22px"><svg viewBox="0 0 20 20" style="width:22px;height:22px;fill:#8c8f94"><path d="M18.300 9.500C15 4.900 8.500 3.800 3.900 7.200c-1.200.9-2.200 2.100-3 3.400.2.400.5.800.8 1.200 3.300 4.600 9.600 5.600 14.200 2.400.9-.7 1.700-1.400 2.400-2.400.3-.4.5-.8.8-1.200-.3-.4-.5-.8-.8-1.100zm-8.200-2.300c.5-.5 1.300-.5 1.800 0s.5 1.300 0 1.800-1.300.5-1.800 0-.5-1.300 0-1.800zm-.1 7.700c-3.100 0-6-1.600-7.700-4.200C3.500 9 5.100 7.800 7 7.200c-.7.800-1 1.700-1 2.700 0 2.200 1.700 4.100 4 4.100 2.200 0 4.100-1.700 4.100-4v-.1c0-1-.4-2-1.100-2.700 1.900.6 3.500 1.800 4.700 3.500-1.700 2.600-4.600 4.200-7.700 4.200z"/></svg></span><span class="abs" style="left:39px;top:135.0px;line-height:20px;white-space:nowrap">Visibility: <b>Public</b> <a>Edit</a></span><span class="abs" style="left:10px;top:171px;width:22px;height:22px"><svg viewBox="0 0 20 20" style="width:22px;height:22px;fill:#8c8f94"><path d="M15 4h3v14H2V4h3V3c0-.83.67-1.500 1.500-1.500S8 2.170 8 3v1h4V3c0-.83.67-1.500 1.500-1.500S15 2.170 15 3v1zM6 3v2.500c0 .28.22.5.5.5s.5-.22.5-.5V3c0-.28-.22-.5-.5-.5S6 2.720 6 3zm7 0v2.500c0 .28.22.5.5.5s.5-.22.5-.5V3c0-.28-.22-.5-.5-.5s-.5.22-.5.5zm4 14V8H3v9h14zM7 16V9H5v7h2zm4 0V9H9v7h2zm4 0V9h-2v7h2z"/></svg></span><span class="abs" style="left:39px;top:171.5px;line-height:20px;white-space:nowrap">Published on: <b>Jan 29, 2025 at 12:00</b> <a>Edit</a></span></div>

<!-- ============ DROPDOWN ============ -->
<div class="abs" style="left:330px;top:376px;width:234px;height:258px;border:2px solid #5a1c8e;z-index:40;pointer-events:none"></div>
<div class="abs" style="left:332px;top:410px;width:230px;height:222px;background:#fff;border-top:1px solid #767676;z-index:39;box-shadow:0 3px 11px 2px rgba(0,0,0,.3);color:#0a4b78;font-size:15.100px;white-space:nowrap"><div class="abs" style="left:12px;top:4px;line-height:22px;font-weight:bold;font-size:15.600px">Product Type</div><div class="abs" style="left:0;top:25.0px;width:231px;height:28px;line-height:29.4px;padding-left:30px">Simple product</div><div class="abs" style="left:0;top:53.0px;width:231px;height:28px;line-height:29.4px;padding-left:30px">Grouped product</div><div class="abs" style="left:0;top:81.0px;width:231px;height:28px;line-height:29.4px;padding-left:30px">External/Affiliate product</div><div class="abs" style="left:0;top:109.0px;width:231px;height:28px;line-height:29.4px;padding-left:30px">Variable product</div><div class="abs" style="left:0;top:137.0px;width:231px;height:28px;background:#1967d2;color:#fff;line-height:29.4px;padding-left:30px">Simple subscription</div><div class="abs" style="left:0;top:165.0px;width:231px;height:28px;line-height:29.4px;padding-left:30px">Variable subscription</div><div class="abs" style="left:0;top:193.0px;width:231px;height:28px;line-height:29.4px;padding-left:30px">Bookable product</div></div>
<svg class="abs" style="left:396.600px;top:569.800px;width:14px;height:21px;z-index:50" viewBox="0 0 14 21"><path d="M1 1 L1 16.500 L4.700 13 L7.300 19.200 L9.800 18.100 L7.200 12.100 L12.200 12.100 Z" fill="#fff" stroke="#000" stroke-width="1.100" stroke-linejoin="miter"/></svg>

</body>
</html>
